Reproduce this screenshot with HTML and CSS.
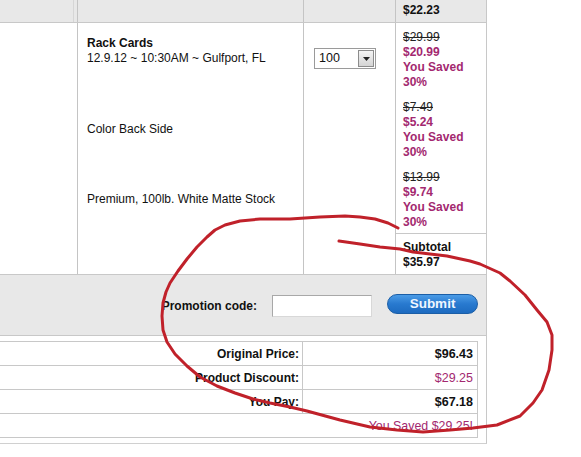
FILE: index.html
```html
<!DOCTYPE html>
<html>
<head>
<meta charset="utf-8">
<title>Shopping Cart</title>
<link rel="stylesheet" href="styles.css">
</head>
<body>
<div class="page">
  <div class="cart">
    <div class="cart-head">
      <div class="hcell hcell-first"></div>
      <div class="hcell"></div>
      <div class="hcell"></div>
      <div class="hcell hcell-price">$22.23</div>
    </div>

    <div class="cart-row">
      <div class="col col-thumb"></div>
      <div class="col col-desc">
        <div class="line line-first">
          <div class="item-name">Rack Cards</div>
          <div>12.9.12 ~ 10:30AM ~ Gulfport, FL</div>
        </div>
        <div class="line line-mid">Color Back Side</div>
        <div class="line line-mid">Premium, 100lb. White Matte Stock</div>
      </div>
      <div class="col col-qty">
        <div class="select">
          <span class="select-value">100</span>
          <span class="select-btn"><svg width="7" height="4" viewBox="0 0 7 4"><path d="M0 0H7L3.5 4Z" fill="#222"/></svg></span>
        </div>
      </div>
      <div class="col col-price">
        <div class="price">
          <div class="was">$29.99</div>
          <div class="now">$20.99</div>
          <div class="now">You Saved</div>
          <div class="now">30%</div>
        </div>
        <div class="price">
          <div class="was">$7.49</div>
          <div class="now">$5.24</div>
          <div class="now">You Saved</div>
          <div class="now">30%</div>
        </div>
        <div class="price">
          <div class="was">$13.99</div>
          <div class="now">$9.74</div>
          <div class="now">You Saved</div>
          <div class="now">30%</div>
        </div>
        <div class="subtotal">
          <div>Subtotal</div>
          <div>$35.97</div>
        </div>
      </div>
    </div>

    <form class="promo" onsubmit="return false">
      <label class="promo-label" for="promo">Promotion code:</label>
      <input class="promo-input" id="promo" type="text">
      <button class="btn-submit" type="submit">Submit</button>
    </form>

    <table class="totals">
      <tr>
        <th>Original Price:</th>
        <td class="amount">$96.43</td>
      </tr>
      <tr>
        <th>Product Discount:</th>
        <td class="amount discount">$29.25</td>
      </tr>
      <tr>
        <th>You Pay:</th>
        <td class="amount">$67.18</td>
      </tr>
      <tr>
        <th class="blank"></th>
        <td class="saved">You Saved $29.25!</td>
      </tr>
    </table>
  </div>

  <svg class="scribble" width="581" height="457" viewBox="0 0 581 457">
    <polyline fill="none" stroke="#c0212a" stroke-width="3" stroke-linecap="round" stroke-linejoin="round"
      points="339,241 360,244 380,247 400,249 413,252 447,256 470,261 480,264 500,273 510,281 525,295 537,310 547,322 552,335 552,350 549,370 542,390 533,403 520,416 497,425 473,428 450,430 423,432 397,430 370,427 340,420 307,411 290,407 270,403 253,399 235,393 217,386 200,377 187,366 175,354 167,342 163,330 162,316 163,303 166,292 170,283 178,271 187,259 197,247 207,237 215,230 225,225 240,221 260,219 290,219 320,217 345,216 360,217 375,219 388,223 398,228"/>
  </svg>
</div>
</body>
</html>
```

FILE: styles.css
```css
html, body {
  margin: 0;
  padding: 0;
  background: #fff;
}

body {
  font-family: "Liberation Sans", Arial, sans-serif;
  font-size: 12px;
  line-height: 15px;
  color: #111;
}

.page {
  position: relative;
  width: 581px;
  height: 457px;
  overflow: hidden;
}

.cart {
  width: 486px;
  border-right: 1px solid #c8c8c8;
  border-bottom: 1px solid #d0d0d0;
  padding-bottom: 5px;
}

/* header strip */
.cart-head {
  display: grid;
  grid-template-columns: 77px 226px 92px 91px;
  height: 22px;
  background: #e8e8e8;
  border-bottom: 1px solid #c8c8c8;
}

.hcell {
  border-left: 1px solid #c4c4c4;
}

.hcell-first {
  border-left: 0;
  border-right: 1px solid #d6d6d6;
  margin-right: 3px;
}

.hcell-price {
  font-weight: bold;
  padding: 3px 0 0 7px;
}

/* product row */
.cart-row {
  display: grid;
  grid-template-columns: 77px 226px 92px 91px;
  border-bottom: 1px solid #c8c8c8;
}

.col {
  border-left: 1px solid #c4c4c4;
}

.col-thumb {
  border-left: 0;
}

.col-desc {
  display: flex;
  flex-direction: column;
  padding: 1px 0 0 9px;
}

.line {
  height: 70px;
  display: flex;
  flex-direction: column;
}

.line-first {
  padding-top: 12px;
  box-sizing: border-box;
}

.line-mid {
  justify-content: center;
}

.item-name {
  font-weight: bold;
}

.col-qty {
  padding: 25px 0 0 10px;
}

.select {
  display: flex;
  align-items: center;
  width: 60px;
  height: 19px;
  border: 1px solid #9a9a9a;
  background: #fff;
}

.select-value {
  flex: 1;
  padding-left: 4px;
  font-size: 12.5px;
}

.select-btn {
  width: 16px;
  height: 17px;
  margin-right: 1px;
  display: flex;
  align-items: center;
  justify-content: center;
  border: 1px solid #8c8c8c;
  box-sizing: border-box;
  background: linear-gradient(#f4f4f4, #d4d4d4);
}

.col-price {
  display: flex;
  flex-direction: column;
}

.price {
  height: 70px;
  box-sizing: border-box;
  padding: 7px 0 0 7px;
}

.was {
  text-decoration: line-through;
  color: #222;
}

.now {
  color: #a3286f;
  font-weight: bold;
}

.subtotal {
  border-top: 1px solid #c8c8c8;
  padding: 6px 0 4px 7px;
  font-weight: bold;
  height: 30px;
}

/* promotion strip */
.promo {
  display: flex;
  align-items: center;
  justify-content: flex-end;
  margin: 0;
  height: 60px;
  padding-right: 8px;
  background: #e8e8e8;
  border-bottom: 1px solid #c8c8c8;
}

.promo-label {
  font-weight: bold;
  margin-right: 15px;
  margin-top: 2px;
}

.promo-input {
  width: 100px;
  height: 22px;
  box-sizing: border-box;
  margin: 2px 15px 0 0;
  padding: 0 3px;
  border: 1px solid #a8a8a8;
  border-right-color: #d8d8d8;
  border-bottom-color: #d8d8d8;
  background: #fff;
  font: inherit;
}

.btn-submit {
  width: 91px;
  height: 20px;
  padding: 0;
  border: 1px solid #1b5ea6;
  border-radius: 10px;
  background: linear-gradient(#4a9be6, #2879cf 50%, #1d6bc0);
  color: #eef6ff;
  font-family: "Liberation Sans", Arial, sans-serif;
  font-size: 13.5px;
  font-weight: bold;
  line-height: 18px;
  margin-top: -2px;
}

/* order totals */
.totals {
  width: 478px;
  margin-top: 5px;
  border-collapse: collapse;
  border-top: 1px solid #c8c8c8;
  border-right: 1px solid #c8c8c8;
}

.totals th,
.totals td {
  height: 22px;
  padding: 1px 4px 0 0;
  text-align: right;
  border-bottom: 1px solid #c8c8c8;
}

.totals th {
  width: 299px;
  padding-right: 3px;
  border-right: 1px solid #c8c8c8;
  font-weight: bold;
}

.totals th.blank {
  border-right: 0;
}

.amount {
  font-weight: bold;
  font-size: 12.5px;
}

.amount.discount {
  font-weight: normal;
  color: #a3286f;
}

.saved {
  color: #a3286f;
  font-size: 12.4px;
}

/* hand-drawn highlight over the totals */
.scribble {
  position: absolute;
  left: 0;
  top: 0;
  pointer-events: none;
}
```
